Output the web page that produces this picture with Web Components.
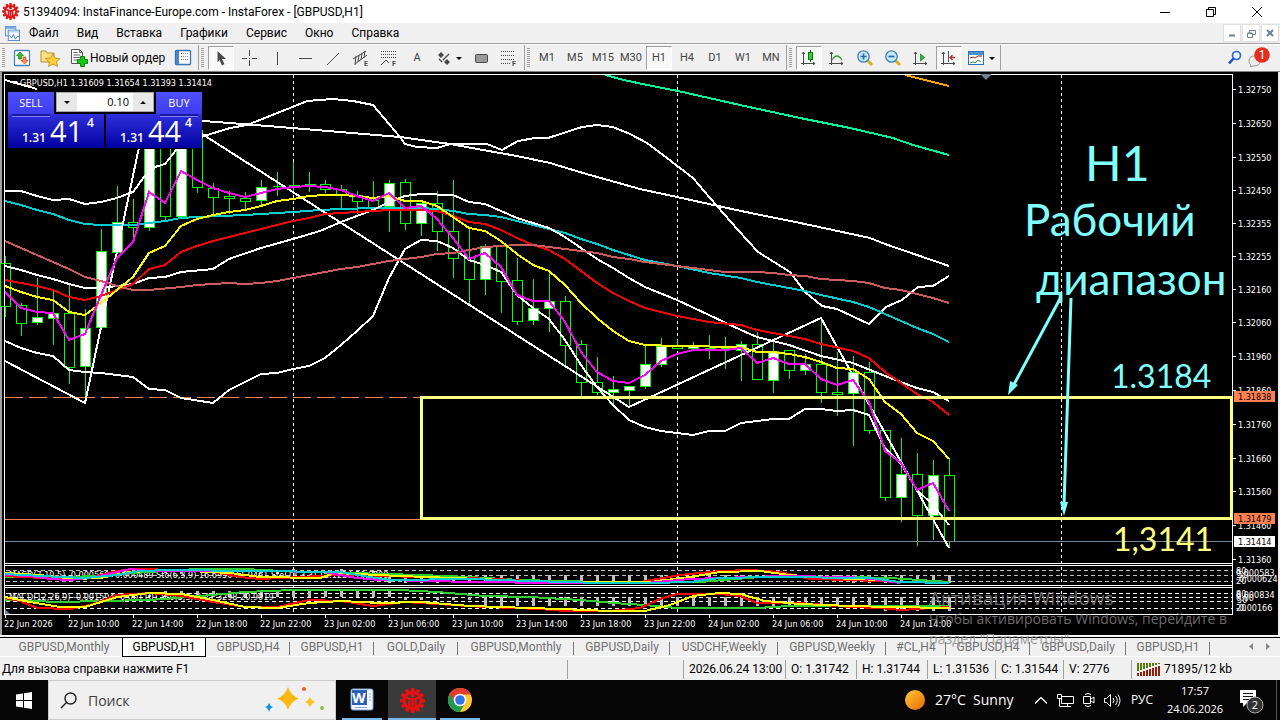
<!DOCTYPE html>
<html lang="ru">
<head>
<meta charset="utf-8">
<title>51394094: InstaFinance-Europe.com - InstaForex - [GBPUSD,H1]</title>
<style>
html,body{margin:0;background:#000}
body{font:12px/16px Roboto,"Open Sans","Noto Sans",sans-serif;color:#000}
</style>
</head>
<body>
<trade-desktop></trade-desktop>
<script>
const define = (name, css, html, ready) => {
  const t = document.createElement('template');
  t.innerHTML = `<style>*{box-sizing:border-box}button{font:inherit;color:inherit;border:0;padding:0;margin:0;background:none}svg{display:block}${css}</style>${html}`;
  customElements.define(name, class extends HTMLElement {
    constructor() {
      super();
      this.attachShadow({mode: 'open'}).appendChild(t.content.cloneNode(true));
    }
    connectedCallback() { if (ready) ready(this, this.shadowRoot); }
  });
};

/* ---------- icons ---------- */
const gear = (c, bg) => {
  let teeth = '';
  for (let a = 0; a < 360; a += 30) teeth += `<rect x="10.2" y="0" width="3.6" height="5" rx="1" transform="rotate(${a} 12 12)"/>`;
  return `<g fill="${c}">${teeth}<circle cx="12" cy="12" r="9.3"/></g><circle cx="12" cy="12" r="6.6" fill="${bg}"/><g stroke="${c}" stroke-width="2.4" fill="none"><path d="M12 22V10M5 8.500q7 5 14 0M9 20v-8M15 20v-8"/></g><circle cx="12" cy="6.600" r="2.200" fill="${c}"/>`;
};
const G = '#4a4a4a';
const axes = `<path d="M3.500 3v13M1 14.500h14M2 5l1.500-2L5 5M13 13l2 1.500-2 1.500" stroke="${G}" fill="none"/>`;
const I = {
  gearTitle: `<svg viewBox="0 0 24 24" width="17" height="17">${gear('#e01818', '#fff')}</svg>`,
  gearTask: `<svg viewBox="0 0 24 24" width="25" height="25">${gear('#e81010', '#3a3a3a')}</svg>`,
  doc: `<svg viewBox="0 0 16 16" width="15" height="15"><rect x=".5" y=".5" width="11" height="10" fill="#e8f1fc" stroke="#5b8fd0"/><rect x=".5" y=".5" width="11" height="2.500" fill="#7ba7e0"/><rect x="3.500" y="4.500" width="12" height="11" fill="#fff" stroke="#4f87cc"/><rect x="4" y="5" width="11" height="2" fill="#bcd4f2"/><path d="M5 10l2 3 2-4 2 5 2-3h2" fill="none" stroke="#3c77c4"/></svg>`,
  newChart: `<svg viewBox="0 0 18 18" width="18" height="18"><rect x="1.500" y="1.500" width="15" height="15" rx="1" fill="#fff" stroke="#4387b8" stroke-width="1.300"/><path d="M7 3L3.500 6.500h2V10h3V6.500h2z" fill="#35c435" stroke="#117a11" stroke-width=".7"/><path d="M11.500 15L15 11.500h-2V8h-3v3.500H8z" fill="#ff8a50" stroke="#c84312" stroke-width=".7"/></svg>`,
  profiles: `<svg viewBox="0 0 20 18" width="20" height="18"><path d="M1 2h5l1 2h7v9H1z" fill="#f8df86" stroke="#b39034"/><path d="M13 5l2 4 5 .5-3.500 3.500 1 4.500-4.500-2.500-4.500 2.500 1-4.500L5.500 9.500l5-.5z" fill="#ffcf3a" stroke="#b98716" stroke-width=".8"/></svg>`,
  order: `<svg viewBox="0 0 18 18" width="18" height="18"><path d="M1.500.5h8l3 3v11h-11z" fill="#fff" stroke="#555"/><path d="M9.500.5v3h3M3.500 3.500h4M3.500 6h7M3.500 8.500h7M3.500 11h4" fill="none" stroke="#666"/><path d="M10.500 7.500h4v3h3v4h-3v3h-4v-3h-3v-4h3z" fill="#16c916" stroke="#08860b"/></svg>`,
  market: `<svg viewBox="0 0 18 18" width="18" height="18"><rect x="1.500" y="1.500" width="15" height="14" rx="1" fill="#fff" stroke="#3474b5" stroke-width="1.300"/><rect x="2" y="2" width="3" height="13" fill="#4888c8"/><path d="M7 4.500h8M7 7.500h8M7 10.500h8" stroke="#8898a8" stroke-dasharray="1 1"/><path d="M7 4.500h1M7 7.500h1M7 10.500h1" stroke="#d22"/></svg>`,
  cursor: `<svg viewBox="0 0 18 18" width="18" height="18"><path d="M5.500 2l8.500 8H10l2.500 5-2.500 1.500L7.500 11l-2 2.500z" fill="${G}"/></svg>`,
  cross: `<svg viewBox="0 0 18 18" width="18" height="18"><path d="M9.500 1v6M9.500 11v6M2 9.500h5M12 9.500h5M9 9.500h1" stroke="${G}"/></svg>`,
  vline: `<svg viewBox="0 0 18 18" width="18" height="18"><path d="M9.500 3v13" stroke="${G}"/></svg>`,
  hline: `<svg viewBox="0 0 18 18" width="18" height="18"><path d="M3 9.500h13" stroke="${G}"/></svg>`,
  trend: `<svg viewBox="0 0 18 18" width="18" height="18"><path d="M3 16L15 4" stroke="${G}"/></svg>`,
  channel: `<svg viewBox="0 0 18 18" width="18" height="18"><path d="M1 10L14 2M3 15l8-6 4-3M4 7l-1 9M7 6L6 13M10 4L9 11M13 2l-1 7" stroke="${G}" fill="none"/><text x="12" y="17" font-size="7" font-weight="bold" fill="${G}">E</text></svg>`,
  fib: `<svg viewBox="0 0 18 18" width="18" height="18"><path d="M1 2.500h16M1 5.500h16M1 8.500h16" stroke="${G}" stroke-dasharray="1 1"/><path d="M1 16l5-5 3 3" fill="none" stroke="${G}"/><text x="12" y="17" font-size="7" font-weight="bold" fill="${G}">F</text></svg>`,
  shapes: `<svg viewBox="0 0 26 18" width="26" height="18"><path d="M5 3l3 3-3 3-3-3zM11 10l3 3-3 3-3-3z" fill="${G}"/><path d="M3 10l3 3M7 11l6-6" stroke="${G}" stroke-width="1.300"/><path d="M20 8h6l-3 3z" fill="#000"/></svg>`,
  rect: `<svg viewBox="0 0 18 18" width="18" height="18"><rect x="3.500" y="5.500" width="12" height="8" rx="1" fill="#999" stroke="${G}"/></svg>`,
  dots: `<svg viewBox="0 0 18 18" width="18" height="18"><path d="M1 2.500h14M1 6.500h14M1 10.500h14M1 14.500h10" stroke="${G}" stroke-dasharray="1 1"/><text x="12" y="17" font-size="7" font-weight="bold" fill="${G}">F</text></svg>`,
  candle: `<svg viewBox="0 0 18 18" width="18" height="18">${axes}<path d="M10.500 1v12" stroke="#070"/><rect x="8.500" y="3.500" width="4" height="7" fill="#3ad03a" stroke="#087808"/></svg>`,
  line: `<svg viewBox="0 0 18 18" width="18" height="18">${axes}<path d="M4 11q5-8 10 0" fill="none" stroke="#3d983d" stroke-width="1.300"/></svg>`,
  zin: `<svg viewBox="0 0 18 18" width="18" height="18"><path d="M11 11l5 5" stroke="#d8b11c" stroke-width="3"/><circle cx="7.500" cy="7.500" r="5.700" fill="#c9e7fb" stroke="#4181b8" stroke-width="1.300"/><path d="M4.500 7.500h6M7.500 4.500v6" stroke="#1f6fa8" stroke-width="1.700"/></svg>`,
  zout: `<svg viewBox="0 0 18 18" width="18" height="18"><path d="M11 11l5 5" stroke="#d8b11c" stroke-width="3"/><circle cx="7.500" cy="7.500" r="5.700" fill="#c9e7fb" stroke="#4181b8" stroke-width="1.300"/><path d="M4.500 7.500h6" stroke="#1f6fa8" stroke-width="1.700"/></svg>`,
  scroll: `<svg viewBox="0 0 18 18" width="18" height="18">${axes}<path d="M8.500 5l4 3.500-4 3.500z" fill="#2fbf3c" stroke="#0b7a16" stroke-width=".7"/></svg>`,
  shift: `<svg viewBox="0 0 18 18" width="18" height="18">${axes}<path d="M8.500 2v11" stroke="#235fa0"/><path d="M10 8.500h5M12.500 6L10 8.500l2.500 2.500" stroke="#c0310f" stroke-width="1.300" fill="none"/></svg>`,
  tmpl: `<svg viewBox="0 0 28 18" width="28" height="18"><rect x="1.500" y="2.500" width="15" height="13" fill="#fff" stroke="#2b72b8"/><rect x="2" y="3" width="14" height="3" fill="#4b93d4"/><path d="M3 9l3-1 2 1 3-2 4 0" stroke="#8a1f10" fill="none"/><path d="M3 14l3-1 2 1 3-3 3 2" stroke="#2c9c2c" fill="none"/><path d="M22 8h6l-3 3z"/></svg>`,
  find: `<svg viewBox="0 0 16 16" width="16" height="16"><circle cx="9.500" cy="5.500" r="4" fill="#eef4ff" stroke="#2f66d8" stroke-width="1.700"/><path d="M6.500 8.500l-4.500 5" stroke="#1f50c8" stroke-width="2.600"/></svg>`,
  chat: `<svg viewBox="0 0 24 22" width="24" height="22"><path d="M2 14q0-5 5.500-5T13 14t-5.500 5H6l-3 1 1-2Q2 17 2 14z" fill="#ececec" stroke="#999"/><circle cx="15" cy="8" r="7.800" fill="#e2301c"/><text x="15" y="12" font-size="12" fill="#fff" text-anchor="middle">1</text></svg>`
};

define('window-title', `
:host{display:flex;height:23px;background:#fff;align-items:center;padding-left:2px}
span{flex:1;margin-left:4px}
button{width:46px;height:22px;display:grid;place-items:center}
`, `${I.gearTitle}<span><slot></slot></span>
<button aria-label="Свернуть"><svg width="10" height="10"><path d="M0 5.500h10" stroke="#000"/></svg></button>
<button aria-label="Восстановить"><svg width="10" height="10"><path d="M.5 2.500h7v7h-7zM2.500 2.500v-2h7v7h-2" fill="none" stroke="#000"/></svg></button>
<button aria-label="Закрыть"><svg width="10" height="10"><path d="M0 0l10 10M10 0L0 10" stroke="#000"/></svg></button>`);

define('menu-bar', `
:host{display:flex;height:21px;background:#f0f0f0;border-bottom:1px solid #a0a0a0;align-items:center;padding-left:5px}
nav{display:flex;flex:1}
nav button{padding:0 9px}
.mdi{display:flex;gap:1px;padding-right:1px}
.mdi button{width:18px;height:18px;background:#fff;border:1px solid #e0e0e0;display:grid;place-items:center}
`, `${I.doc}<nav></nav><div class="mdi">
<button aria-label="Свернуть окно"><svg width="8" height="8"><path d="M1 6.500h6" stroke="#708090" stroke-width="2"/></svg></button>
<button aria-label="Восстановить окно"><svg width="9" height="9"><path d="M.5 4.500h5v4h-5zM.5 4h5M2.500 4V1.500h6v4h-3M2.500 1.500h6" fill="none" stroke="#708090"/></svg></button>
<button aria-label="Закрыть окно"><svg width="8" height="8"><path d="M1 1l6 6M7 1L1 7" stroke="#708090" stroke-width="2"/></svg></button></div>`,
(el, root) => {
  root.querySelector('nav').innerHTML = ['Файл','Вид','Вставка','Графики','Сервис','Окно','Справка'].map(s => `<button>${s}</button>`).join('');
});

define('tool-group', `
:host{display:flex;border-right:1px solid #a0a0a0;padding-right:1px;height:25px;align-items:center}
i{width:3px;height:19px;margin:0 3px 0 2px;background:repeating-linear-gradient(#a0a0a0 0 1px,#f0f0f0 1px 2px)}
`, `<i></i><slot></slot>`);

define('tool-button', `
:host{display:block}
button{min-width:28px;height:24px;display:flex;align-items:center;justify-content:center;color:#444;white-space:nowrap}
:host([wide]) button{width:36px}
:host([label]) button{padding-left:6px;gap:2px;color:#000;width:105px;justify-content:flex-start}
span{font-size:11px}
:host([label]) span{font-size:12px}
:host([on]) button{border:1px solid #a0a0a0;border-right-color:#fff;border-bottom-color:#fff;background:#f8f8f8;min-width:26px;margin:0 1px}
`, `<button></button>`, (el, root) => {
  const b = root.querySelector('button'), k = el.getAttribute('icon');
  b.innerHTML = (k ? I[k] : '') + (el.textContent ? `<span>${el.textContent}</span>` : '');
  if (k) b.setAttribute('aria-label', el.textContent || k);
});

define('tool-strip', `
:host{display:flex;height:28px;background:#f0f0f0;border-top:1px solid #fff;border-bottom:1px solid #808080;align-items:flex-start}
.end{margin-left:auto;display:flex;height:25px;align-items:center;gap:4px;padding-right:9px}
`, `<tool-group><tool-button icon="newChart"></tool-button><tool-button icon="profiles"></tool-button><tool-button icon="order" label>Новый ордер</tool-button><tool-button icon="market"></tool-button></tool-group>
<tool-group><tool-button icon="cursor" on></tool-button>${['cross','vline','hline','trend','channel','fib'].map(k => `<tool-button icon="${k}"></tool-button>`).join('')}<tool-button>A</tool-button><tool-button icon="shapes" wide></tool-button><tool-button icon="rect"></tool-button><tool-button icon="dots"></tool-button></tool-group>
<tool-group>${['M1','M5','M15','M30','H1','H4','D1','W1','MN'].map(k => `<tool-button${k === 'H1' ? ' on' : ''}>${k}</tool-button>`).join('')}</tool-group>
<tool-group><tool-button icon="candle" on></tool-button>${['line','zin','zout','scroll'].map(k => `<tool-button icon="${k}"></tool-button>`).join('')}<tool-button icon="shift" on></tool-button><tool-button icon="tmpl" wide></tool-button></tool-group>
<div class="end">${I.find}${I.chat}</div>`);

/* ---------- chart data: candles as [body top, body bottom, wick top, wick bottom, rising] ---------- */
const candles = [[263,306,256,316,0],[305,323,303,335,0],[317,322,278,324,1],[313,318,291,344,1],[313,367,285,383,0],[328,366,309,402,1],[251,327,229,328,1],[222,252,186,252,1],[222,227,199,242,0],[130,227,120,230,1],[130,216,120,220,0],[130,216,120,216,1],[130,187,120,192,0],[188,197,183,213,0],[196,198,191,213,0],[198,201,192,210,0],[187,200,180,206,1],[186,186,172,195,0],[185,185,162,190,0],[184,184,172,191,0],[184,189,180,192,0],[189,194,185,209,0],[195,201,191,213,0],[200,207,181,207,0],[183,206,180,231,1],[182,223,179,229,0],[203,223,203,235,1],[203,231,191,250,0],[231,258,180,277,0],[257,279,229,303,0],[246,279,244,294,1],[246,281,246,312,0],[280,321,258,324,0],[308,320,279,324,1],[301,308,272,331,1],[301,345,296,366,0],[344,382,340,396,0],[382,392,357,394,0],[389,392,376,404,1],[386,390,386,405,1],[364,386,346,388,1],[346,364,338,366,1],[346,348,340,348,0],[346,348,342,349,1],[348,348,335,358,0],[348,348,337,368,0],[344,350,341,380,1],[344,379,332,379,0],[351,380,342,392,1],[350,370,350,378,0],[364,370,354,374,1],[364,392,318,402,0],[392,394,352,415,0],[372,393,356,445,1],[372,430,362,433,0],[430,497,430,500,0],[474,497,438,521,1],[474,515,453,545,0],[475,515,460,539,1],[475,541,459,547,0]];
const W = '#fff', lines = [
  [W,'5,80 37,89'],
  ['#ffa500','905,75 949,86'],
  ['#00fa9a','605,75 624,80 647,85 678,91 740,105 800,118 850,128 893,138 913,145 949,155'],
  [W,'5,191 21,191 37,196 53,200 69,199 85,204 101,202 117,198 133,192 144,177 155,167 165,164 181,144 204,136 230,128 247,125 290,108 307,101 333,99 353,101 373,105 400,137 405,144 417,147 437,148 450,144 487,144 502,150 518,141 535,138 548,138 582,127 597,125 613,127 630,134 647,143 667,158 693,178 710,198 738,230 758,252 790,272 805,292 822,306 837,309 869,324 886,307 902,300 918,287 933,286 949,276'],
  [W,'180,118 204,121 280,127 400,137 450,144 483,150 517,156 550,163 583,173 640,189 677,197 741,211 805,224 833,230 870,238 885,244 949,266'],
  ['#00ced1','5,201 21,205 37,210 53,214 69,220 85,224 101,225 133,225 149,223 165,221 181,218 197,217 245,215 293,212 320,210 341,209 373,208 421,208 437,209 453,211 469,214 485,215 501,217 517,221 533,225 549,229 565,233 581,239 597,244 613,250 629,255 645,260 677,266 709,273 741,278 757,282 773,285 805,291 821,295 853,302 869,307 885,314 901,321 917,328 933,334 949,342'],
  [W,'5,341 21,348 37,353 53,356 69,370 85,372 101,373 133,377 149,389 165,390 181,398 213,403 229,390 261,374 277,373 293,369 309,366 325,358 341,345 357,331 373,316 389,278 405,249 421,240 437,241 453,248 469,260 485,265 501,272 517,295 533,308 549,319 565,340 581,365 597,387 613,405 629,420 645,427 661,431 677,433 693,435 709,431 725,431 741,423 757,421 773,419 789,419 805,409 821,409 837,411 853,410 869,415 885,448 901,464 917,490 933,505 949,525'],
  [W,'5,266 21,270 37,275 53,279 69,284 85,288 101,288 133,284 149,278 165,277 181,272 213,269 229,259 261,248 293,239 320,231 341,222 373,210 389,202 405,196 421,194 453,195 469,202 485,204 517,218 549,228 565,237 581,248 597,259 613,268 629,278 645,287 677,300 709,315 741,330 757,337 789,345 821,356 853,363 885,376 917,388 933,392 949,401'],
  [W,'5,361 85,403 149,100 629,407 821,318 949,548'],
  ['#ff0000','5,280 21,283 37,286 53,290 69,297 85,300 101,296 117,290 133,284 149,269 165,265 181,252 197,246 213,241 229,237 245,233 261,229 277,225 293,221 309,218 325,214 341,213 373,211 389,210 421,210 437,211 453,216 469,222 485,224 501,230 517,238 533,245 549,250 565,259 581,271 597,283 613,293 629,301 645,308 661,312 677,316 709,322 741,325 757,330 773,333 805,339 821,344 853,351 869,358 885,372 901,383 917,394 933,402 949,415'],
  ['#cd5c5c','5,241 21,248 37,255 53,262 69,269 85,277 101,281 117,286 133,290 149,290 181,287 197,285 213,284 229,283 245,284 261,283 277,281 293,278 309,275 325,272 341,269 357,267 373,264 389,261 405,259 421,257 437,254 453,253 469,250 485,247 501,246 517,245 533,245 549,247 565,249 581,251 597,253 613,257 629,259 645,262 661,264 677,266 693,268 709,270 725,272 757,272 773,273 789,275 805,276 821,279 853,281 869,283 885,288 901,290 917,294 933,298 949,303'],
  ['#ffff00','5,286 21,292 37,297 53,300 69,312 85,315 101,303 117,290 133,277 149,253 165,246 181,226 197,219 213,215 229,212 245,210 261,206 277,201 293,199 309,196 325,195 341,195 357,196 373,198 389,196 405,201 421,201 437,206 453,217 469,228 485,231 501,241 517,254 533,265 549,271 565,285 581,303 597,318 613,331 629,341 645,345 677,346 741,347 757,352 773,352 789,354 805,357 821,362 837,368 853,369 869,379 885,402 901,414 917,433 933,441 949,459'],
  ['#ff00ff','5,292 21,308 37,312 53,313 69,340 85,334 101,295 117,258 133,242 149,192 165,203 181,171 197,180 213,188 229,193 245,197 261,193 277,189 293,187 309,186 325,187 341,190 357,196 373,201 389,193 405,208 421,206 437,219 453,238 469,259 485,253 501,267 517,295 533,301 549,301 565,322 581,352 597,372 613,381 629,383 645,375 661,361 677,354 693,350 725,350 741,348 757,363 773,358 789,364 805,364 821,379 837,385 853,380 869,402 885,451 901,463 917,490 933,483 949,511']
];
const studies = [
  ['#32cd32','5,577 60,578 150,572 197,569 245,569 300,572 350,573 420,575 470,577 520,580 600,582 700,582 760,577 850,577 890,578 949,582'],
  ['#ff0000','5,576 60,579 90,578 117,571 135,569 180,570 215,572 240,577 260,579 300,577 340,575 420,577 500,579 540,582 640,582 680,575 720,571 750,570 780,572 810,579 850,580 900,582'],
  ['#ffff00','5,573 40,575 75,579 100,578 130,572 170,570 230,573 260,577 320,578 335,573 400,576 480,579 550,582 650,582 690,577 720,572 760,571 790,575 830,578 880,580'],
  ['#ff00ff','5,575 30,576 50,579 70,580 95,577 117,572 130,569 150,571 260,571 325,572 340,575 357,578 380,580 430,581 470,582 560,583 645,583 690,579 780,576 850,577 880,580 900,583'],
  ['#00ced1','5,574 60,577 85,578 117,575 140,571 170,570 250,571 340,572 370,577 390,580 470,579 530,581 600,583 650,583 690,582 720,578 770,577 870,578 900,582 949,583'],
  ['#32cd32','5,600 60,602 100,601 150,600 200,596 245,592 293,590 400,590 437,592 485,596 530,597 580,600 613,603 645,605 677,608 757,608 789,606 949,606'],
  ['#ff0000','5,598 20,601 37,608 70,609 90,605 117,595 150,593 181,596 213,602 245,607 277,607 309,600 341,601 373,606 405,602 437,604 485,607 540,609 565,611 610,611 640,608 660,599 677,594 720,594 740,596 757,603 800,603 850,607 880,608 901,610 949,607'],
  ['#ffff00','5,597 30,602 60,607 85,607 117,597 149,593 181,594 213,600 245,607 277,608 309,603 341,601 380,603 420,602 470,606 560,609 610,611 645,611 670,605 693,596 720,593 740,594 765,601 800,604 850,606 890,607 949,608']
];
const prices = [['1.32750',89],['1.32650',123],['1.32550',157],['1.32450',190],['1.32355',223],['1.32255',256],['1.32160',289],['1.32060',322],['1.31960',356],['1.31860',390],['1.31760',424],['1.31660',458],['1.31560',491],['1.31460',525],['1.31360',559]];
const times = ['22 Jun 2026','22 Jun 10:00','22 Jun 14:00','22 Jun 18:00','22 Jun 22:00','23 Jun 02:00','23 Jun 06:00','23 Jun 10:00','23 Jun 14:00','23 Jun 18:00','23 Jun 22:00','24 Jun 02:00','24 Jun 06:00','24 Jun 10:00','24 Jun 14:00'];

function drawChart() {
  const poly = ([c, p]) => `<polyline points="${p}" stroke="${c}"/>`;
  const bars = candles.map(([a, b, t, w, up], i) => {
    const x = 5 + 16 * i + .5;
    return `<path d="M${x} ${t}V${w + 1}"/>` + (a === b ? `<path d="M${x - 5} ${a + .5}h11"/>` : `<rect x="${x - 5}" y="${a + .5}" width="10" height="${b - a}" fill="${up ? '#fff' : '#000'}"/>`);
  }).join('');
  let hist = '';
  for (let i = 7; i < 60; i++) {
    const x = 4 + 16 * i;
    const up = i < 25, len = up ? (i < 10 ? 2 : 6) : (i < 30 ? 3 : i < 55 ? 9 : 14);
    hist += `<rect x="${x}" y="${up ? 597 - len : 597}" width="3" height="${len}"/>`;
    const l1 = i < 24 ? 3 : i > 42 && i < 53 ? 3 : 8;
    hist += `<rect x="${x}" y="${i < 24 ? 572 - l1 + i % 3 : 575}" width="3" height="${l1}"/>`;
  }
  const v = x => `<path d="M${x}.5 75V612"/>`;
  const h = y => `<path d="M6 ${y}.5H1232"/>`;
  return `<rect x="0" y="72" width="1278" height="563" fill="#000"/><rect x="0" y="72" width="2" height="563" fill="#a0a0a0"/>
<g fill="none" stroke-width="1" shape-rendering="crispEdges">
<g stroke="#fff" stroke-dasharray="3 3">${v(293)}${v(677)}${v(1061)}</g>
<path d="M5 397.500H421" stroke="#ff7f50" stroke-dasharray="18 6"/><path d="M5 519.500H421" stroke="#ff7f50"/>
<g stroke="#00ff00">${bars}</g>
<path d="M5 541.500H1232" stroke="#778899"/>
<g stroke-width="2">${lines.map(poly).join('')}</g>
<g stroke="#c0c0c0" stroke-dasharray="4 3">${h(570)}${h(575)}${h(581)}</g><g stroke="#fff" stroke-dasharray="4 3">${h(593)}${h(597)}${h(601)}${h(608)}</g>
<g fill="#c0c0c0">${hist}</g></g>
<g class="s"><text x="9" y="578">MACD(7,10,5) -0.000560 -0.000489  Sto(6,3,9) 16.6950 11.9461  Sto(14,3,3) 12.1224 16.6708</text><text x="9" y="600">MACD(12,26,9) -0.001504 -0.001101  Sto(5,3,3) 21.3298 20.9019</text></g>
<g fill="none" stroke-width="2" shape-rendering="crispEdges">${studies.map(poly).join('')}</g>
<g fill="none" stroke="#fff" shape-rendering="crispEdges"><path d="M4.500 74V614M4 74.500H1232M4 563.500H1233M4 565.500H1233M4 585.500H1233M4 587.500H1233M4 614.500H1233M1232.500 74V614"/>
${prices.map(([, y]) => `<path d="M1233 ${y}.5h3"/>`).join('')}${times.map((_, i) => `<path d="M${5 + 64 * i}.5 615v3"/>`).join('')}</g>
<path d="M980 74h12l-6 6z" fill="#708090"/><path d="M5 609v5h5z" fill="#708090"/><path d="M9 81h9l-4 3z" fill="#fff"/>
<rect x="421.500" y="397.500" width="810" height="121" fill="none" stroke="#ffff80" stroke-width="3"/>
<g stroke="#80ffff" fill="#80ffff" stroke-width="3"><path d="M1061 297L1012 388M1071 298L1064 505"/><path d="M1008 395l2-14 8 4zM1064 516l-4-14h8z" stroke="none"/></g>
<g class="s">${prices.map(([p, y]) => `<text x="1238" y="${y + 4}">${p}</text>`).join('')}
<text x="1236" y="574">80</text><text x="1238" y="578">50</text><text x="1236" y="584">20</text><text x="1236" y="576">0.000583</text><text x="1236" y="582">-0.000624</text>
<text x="1236" y="597">80</text><text x="1237" y="603">50</text><text x="1236" y="611">20</text><text x="1236" y="601">0.00</text><text x="1236" y="598">0.000834</text><text x="1236" y="611">-0.00166</text>
${times.map((t, i) => `<text x="${4 + 64 * i}" y="627">${t}</text>`).join('')}
<text x="20" y="86">GBPUSD,H1  1.31609 1.31654 1.31393 1.31414</text></g>
<rect x="1234" y="391" width="41" height="11" fill="#ff7f50"/><rect x="1234" y="513" width="41" height="11" fill="#ff7f50"/><rect x="1234" y="536" width="41" height="11" fill="#fff"/>
<g class="s k"><text x="1238" y="400">1.31838</text><text x="1238" y="522">1.31479</text><text x="1238" y="545">1.31414</text></g>
<g class="n" fill="#80ffff"><text x="1085" y="181" font-size="48">H1</text><text x="1024" y="236" font-size="44">Рабочий</text><text x="1036" y="295" font-size="44">диапазон</text><text x="1111" y="388" font-size="32">1.3184</text></g><g class="n" fill="#ffff80"><text x="1113" y="551" font-size="32">1,3141</text></g>`;
}

define('price-chart', `
:host{display:block;position:relative;background:#f0f0f0}
svg{width:100%;height:auto}
.s{font:9px "DejaVu Sans Condensed","Open Sans",sans-serif;fill:#fff;white-space:pre}
.k{fill:#000}
.n{font-family:Lato,"Open Sans",sans-serif}
trade-panel{position:absolute;left:8px;top:20px}
`, `<svg viewBox="0 72 1280 563" role="img" aria-label="GBPUSD,H1">${drawChart()}</svg><trade-panel></trade-panel>`);

define('trade-panel', `
:host{display:block;width:194px;background:#000;color:#fff;border-bottom:1px solid #000;font-family:"Open Sans","Noto Sans",sans-serif}
.row{display:flex;justify-content:space-between}
.tab{width:46px;height:22px;background:linear-gradient(#5050ff,#3c3cec);font-size:11px}
.spin{display:flex;width:98px;height:20px;border:1px solid #aaa;background:#fff}
.spin button{width:20px;background:#e8e8e8;color:#000;display:grid;place-items:center}
input{flex:1;min-width:0;border:0;padding:0 4px;font:inherit;font-size:11px;text-align:right;background:#fff;outline:0}
.price{width:96px;height:34px;background:linear-gradient(#3030dc,#0000a0);display:flex;align-items:baseline;padding-left:14px;position:relative}
.price::before{content:"";position:absolute;left:4px;top:0;width:38px;height:2px;background:#1a1a9c;border-bottom:1px solid #8080ff}
.price.b::before{left:auto;right:4px}
.price b{font-size:12px;font-weight:600;margin-right:4px}
.price big{font-size:29px;line-height:34px}
.price sup{font-size:12px;font-weight:600;align-self:flex-start;line-height:18px;margin-left:4px}
`, `<div class="row"><button class="tab">SELL</button><div class="spin"><button aria-label="Меньше"><svg width="6" height="3"><path d="M0 0h6L3 3z"/></svg></button><input aria-label="Объем" value="0.10"><button aria-label="Больше"><svg width="6" height="3"><path d="M0 3h6L3 0z"/></svg></button></div><button class="tab">BUY</button></div>
<div class="row"><div class="price"><b>1.31</b><big>41</big><sup>4</sup></div><div class="price b"><b>1.31</b><big>44</big><sup>4</sup></div></div>`);

define('chart-tabs', `
:host{display:flex;height:22px;background:#f0f0f0;border-top:1px solid #fff;border-bottom:1px solid #fff;color:#707070}
nav{display:flex;flex:1;padding-left:6px;min-width:0;border-top:1px solid #f0f0f0;box-shadow:inset 0 1px #000}
button{height:18px;display:grid;place-items:center;white-space:nowrap;background:linear-gradient(#777,#777) right 4px/1px 13px no-repeat;margin-top:1px}
.w5{width:60px}.w7{width:84px}.w8{width:96px}.w9{width:108px}.w10{width:116px}
.on{background:#fff;color:#000;border:1px solid #000;border-top:0;height:19px}
.before{background:none}
.arr{display:flex;width:40px;align-items:center;justify-content:space-between;padding:0 9px;box-shadow:inset 0 1px #f0f0f0,inset 0 2px #000}
`, `<nav></nav><div class="arr"><svg width="5" height="7"><path d="M4 0v7L0 3.500z" fill="#888"/></svg><svg width="5" height="7"><path d="M0 0v7l4-3.500z" fill="#888"/></svg></div>`,
(el, root) => {
  const t = [['GBPUSD,Monthly','w10 before'],['GBPUSD,H1','w7 on'],['GBPUSD,H4','w7'],['GBPUSD,H1','w7'],['GOLD,Daily','w7'],['GBPUSD,Monthly','w10'],['GBPUSD,Daily','w8'],['USDCHF,Weekly','w9'],['GBPUSD,Weekly','w9'],['#CL,H4','w5'],['GBPUSD,H4','w7'],['GBPUSD,Daily','w8'],['GBPUSD,H1','w7']];
  root.querySelector('nav').innerHTML = t.map(([s, c]) => `<button class="${c}">${s}</button>`).join('');
});

define('status-line', `
:host{display:flex;height:23px;padding-top:2px;background:#f0f0f0;align-items:center;white-space:nowrap;box-sizing:border-box}
span{height:19px;line-height:19px;border-left:1px solid #a0a0a0;padding-left:5px}
.help{flex:1;border:0;padding-left:2px}
.a{width:116px}.d{width:102px}.p{width:71px}.q{width:68px}.k{width:149px;display:flex;align-items:center;gap:4px}
`, `<span class="help">Для вызова справки нажмите F1</span><span class="a"></span><span class="d">2026.06.24 13:00</span><span class="p">O: 1.31742</span><span class="p">H: 1.31744</span><span class="q">L: 1.31536</span><span class="q">C: 1.31544</span><span class="q">V: 2776</span><span class="k"><svg width="23" height="13" aria-hidden="true"></svg>71895/12 kb</span>`,
(el, root) => {
  let s = '';
  for (let i = 0; i < 8; i++) s += `<rect x="${i * 3}" y="0" width="2" height="${8 - i}" fill="#5a7a10"/><rect x="${i * 3}" y="${10 - i}" width="2" height="${3 + i}" fill="#9c1c0c"/>`;
  root.querySelector('svg').innerHTML = s;
});

define('task-bar', `
:host{display:flex;height:40px;background:#060606;color:#fff;align-items:stretch;font-family:"Open Sans","Noto Sans",sans-serif}
button,.tray>*{display:grid;place-items:center}
.start{width:48px}
.search{width:288px;background:#f0f0f0;border:1px solid #ccc;display:flex;align-items:center;padding:0 8px 0 11px;gap:11px}
.search input{flex:1;min-width:0;border:0;background:none;font:14px "Open Sans",sans-serif;padding:0;outline:0}
.search input::placeholder{color:#404040;opacity:1}
.apps{display:flex;margin-left:2px}
.apps button{width:48px;background:linear-gradient(#76b9ed,#76b9ed) center bottom/40px 2px no-repeat}
.apps .on{background:linear-gradient(#76b9ed,#76b9ed) center bottom/48px 2px no-repeat #3a3a3a}
.apps button:first-child{margin-right:2px}
.tray{margin-left:auto;display:flex;align-items:center}
.w{display:flex;gap:10px;font-size:14px;width:124px;justify-content:flex-start;white-space:pre}
.i{width:24px}.l{width:34px}
.time{width:72px;text-align:center;line-height:18px;font-size:11px}
.note{width:46px;border-right:1px solid #555;height:40px;margin-right:3px;justify-items:start;padding-left:4px}
`, `<button class="start" aria-label="Пуск"><svg width="16" height="17" fill="#fff"><path d="M0 2.500l7-1V8H0zM8 1.300L16 0v8H8zM0 9h7v6.500l-7-1zM8 9h8v8l-8-1.300z"/></svg></button>
<label class="search"><svg width="17" height="17"><circle cx="10.500" cy="6.500" r="5.500" fill="none" stroke="#222" stroke-width="1.400"/><path d="M6.500 10.500L1 16" stroke="#222" stroke-width="1.400"/></svg><input placeholder="Поиск" aria-label="Поиск"><svg width="62" height="26"><path d="M23 0q3 9 11 11.500q-8 2.500-11 11.500q-3-9-11-11.500q8-2.500 11-11.500z" fill="#fbb813"/><path d="M45 10q2 4 5 5-3 1-5 5-2-4-5-5 3-1 5-5z" fill="#fcc42c"/><path d="M4 16q1 3 4 4-3 1-4 5-1-4-4-5 3-1 4-4z" fill="#1295dd"/><circle cx="39" cy="2" r="2" fill="#f25a29"/><circle cx="57" cy="21" r="2" fill="#8bc34a"/></svg></label>
<div class="apps"><button aria-label="Word"><svg width="24" height="24"><rect x="1" y="1" width="22" height="21" rx="2" fill="#f4f8fd" stroke="#7aa6d8"/><rect x="2" y="2" width="15" height="15" fill="#2b62b4"/><text x="2" y="15" font-size="14" font-weight="bold" fill="#fff">W</text><path d="M19 6h2M19 9h2M19 12h2M5 19.500h12" stroke="#8aaedb"/></svg></button><button class="on" aria-label="InstaForex">${I.gearTask}</button><button aria-label="Chrome"><svg viewBox="0 0 24 24" width="24" height="24"><circle cx="12" cy="12" r="12" fill="#fcc934"/><path d="M12 12L1.600 6A12 12 0 0 0 12 24l5.200-9z" fill="#1e9c4c"/><path d="M12 12V6.500h10.700A12 12 0 0 0 1.600 6l5.200 9z" fill="#e33b2e"/><circle cx="12" cy="12" r="6.300" fill="#fff"/><circle cx="12" cy="12" r="4.800" fill="#3076ea"/></svg></button></div>
<div class="tray"><div class="w"><svg width="20" height="20"><defs><linearGradient id="s" x1="0" y1="0" x2="1" y2="1"><stop stop-color="#ffc83a"/><stop offset="1" stop-color="#e96a00"/></linearGradient></defs><circle cx="10" cy="10" r="10" fill="url(#s)"/></svg><span>27°C  Sunny</span></div>
<div class="i"><svg width="12" height="7"><path d="M0 6.500l6-6 6 6" fill="none" stroke="#fff" stroke-width="1.300"/></svg></div>
<div class="i"><svg width="17" height="14"><path d="M4.500 3.500h12v7h-12zM10.500 10.500v3M6 13.500h8M.5 1.500h4v4h-4zM2.500 6v7.500h4" fill="none" stroke="#fff"/></svg></div>
<div class="i"><svg width="14" height="16"><path d="M1.500 4.500h7v7h-7zM9 7l3-2v6l-3-2M3 2.500q3-2 6 0M3 13.500q3 2 6 0" fill="none" stroke="#fff"/></svg></div>
<div class="i"><svg width="18" height="13"><path d="M.5 4.500h2l4-4v12l-4-4h-2zM9 4q2 2.500 0 5M11.500 2q3.500 4.500 0 9M14 .5q4 6 0 12" fill="none" stroke="#fff"/></svg></div>
<div class="l">РУС</div><div class="time">17:57<br>24.06.2026</div>
<div class="note"><svg width="30" height="30"><path d="M5 5h16v13h-9l-4 4v-4H5z" fill="#fff"/><path d="M8 8.500h10M8 11.500h10M8 14.500h6" stroke="#111"/><circle cx="20" cy="20" r="8" fill="#333" stroke="#aaa"/><text x="20" y="24" font-size="11" fill="#fff" text-anchor="middle">2</text></svg></div></div>`);

define('activation-note', `
:host{display:block;color:#888c;font:14px/20px "Open Sans","Noto Sans",sans-serif;white-space:nowrap;pointer-events:none}
b{display:block;font-weight:400;font-size:19px;line-height:22px}
`, `<b>Активация Windows</b>Чтобы активировать Windows, перейдите в<br>раздел "Параметры".`);

define('trade-desktop', `
:host{display:block;position:relative;min-height:100vh;background:#f0f0f0}
activation-note{position:absolute;right:53px;bottom:71px}
`, `<window-title>51394094: InstaFinance-Europe.com - InstaForex - [GBPUSD,H1]</window-title><menu-bar></menu-bar><tool-strip></tool-strip><price-chart></price-chart><chart-tabs></chart-tabs><status-line></status-line><task-bar></task-bar><activation-note></activation-note>`);
</script>
</body>
</html>
